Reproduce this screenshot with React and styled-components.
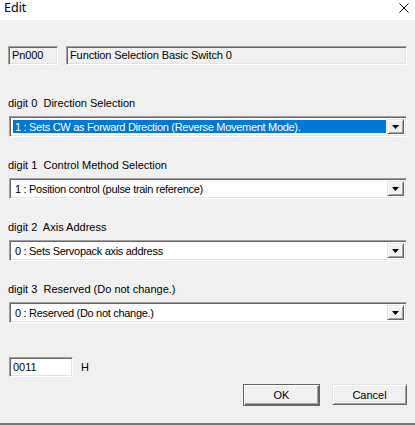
import React from "react";
import styled, { createGlobalStyle, css } from "styled-components";

const Global = createGlobalStyle`
  html, body { margin: 0; padding: 0; background: #f0f0f0; }
  body { font-family: "Liberation Sans", Arial, sans-serif; }
`;

const sunken = css`
  box-sizing: border-box;
  border: 1px solid;
  border-color: #a0a0a0 #ffffff #ffffff #a0a0a0;
  box-shadow: inset 1px 1px 0 #696969, inset -1px -1px 0 #e3e3e3;
`;

const raised = css`
  box-sizing: border-box;
  border: 1px solid;
  border-color: #e3e3e3 #696969 #696969 #e3e3e3;
  box-shadow: inset 1px 1px 0 #ffffff, inset -1px -1px 0 #a0a0a0;
`;

const Window = styled.div`
  width: 415px;
  height: 425px;
  box-sizing: border-box;
  background: #f0f0f0;
  display: flex;
  flex-direction: column;
  border-bottom: 2px solid #767676;
  overflow: hidden;
`;

const TitleBar = styled.div`
  height: 20px;
  background: #ffffff;
  display: flex;
  align-items: flex-start;
  justify-content: space-between;
  padding: 0 6px 0 4px;
`;

const Title = styled.span`
  font-family: "Noto Sans", "Open Sans", sans-serif;
  font-size: 12.5px;
  line-height: 16px;
  color: #000;
`;

const Close = styled.svg`
  margin-top: 3px;
  width: 10px;
  height: 10px;
`;

const Body = styled.div`
  flex: 1;
  display: flex;
  flex-direction: column;
  padding: 26px 8px 0 8px;
  font-size: 11px;
  color: #000;
`;

const ParamRow = styled.div`
  display: flex;
  gap: 8px;
  height: 19px;
  margin-bottom: 31px;
`;

const ReadBox = styled.div`
  ${sunken};
  width: ${(p) => p.$w || "auto"};
  flex: ${(p) => (p.$grow ? 1 : "none")};
  background: #f0f0f0;
  padding: 0 3px;
  line-height: 17px;
  white-space: nowrap;
  letter-spacing: -0.1px;
`;

const Group = styled.div`
  display: flex;
  flex-direction: column;
  gap: 6px;
  margin-bottom: 21px;
`;

const Label = styled.div`
  height: 14px;
  line-height: 14px;
  white-space: pre;
`;

const Combo = styled.div`
  ${sunken};
  height: 21px;
  margin-left: 1px;
  background: #ffffff;
  display: flex;
  align-items: stretch;
  padding: 2px;
`;

const ComboText = styled.div`
  flex: 1;
  margin: 1px;
  padding: 0 2px;
  line-height: 15px;
  white-space: nowrap;
  overflow: hidden;
  letter-spacing: -0.3px;
  background: ${(p) => (p.$selected ? "#0078d7" : "transparent")};
  color: ${(p) => (p.$selected ? "#ffffff" : "#000000")};
`;

const DropButton = styled.div`
  ${raised};
  width: 17px;
  background: #f0f0f0;
  display: flex;
  align-items: center;
  justify-content: center;
`;

const HexRow = styled.div`
  display: flex;
  align-items: center;
  gap: 8px;
  margin-top: 13px;
`;

const HexInput = styled.div`
  ${sunken};
  width: 64px;
  height: 20px;
  margin-left: 1px;
  background: #ffffff;
  padding: 0 3px;
  line-height: 18px;
`;

const Unit = styled.span`
  font-size: 11px;
`;

const ButtonRow = styled.div`
  display: flex;
  justify-content: flex-end;
  gap: 12px;
  margin-top: 7px;
`;

const Button = styled.div`
  ${raised};
  width: 75px;
  height: 21px;
  background: #f0f0f0;
  display: flex;
  align-items: center;
  justify-content: center;
  font-size: 11px;
  ${(p) =>
    p.$default &&
    css`
      width: 77px;
      height: 22px;
      border: 1px solid #646464;
      box-shadow: inset 1px 1px 0 #ffffff, inset -1px -1px 0 #696969,
        inset -2px -2px 0 #a0a0a0;
    `}
`;

const Arrow = () => (
  <svg width="7" height="4" viewBox="0 0 7 4">
    <path d="M0 0H7L3.5 4Z" fill="#000" />
  </svg>
);

const groups = [
  { label: "digit 0  Direction Selection", value: "1 : Sets CW as Forward Direction (Reverse Movement Mode).", selected: true },
  { label: "digit 1  Control Method Selection", value: "1 : Position control (pulse train reference)" },
  { label: "digit 2  Axis Address", value: "0 : Sets Servopack axis address" },
  { label: "digit 3  Reserved (Do not change.)", value: "0 : Reserved (Do not change.)" },
];

export default function App() {
  return (
    <>
      <Global />
      <Window>
        <TitleBar>
          <Title>Edit</Title>
          <Close viewBox="0 0 10 10">
            <path d="M0.5 0.5L9.5 9.5M9.5 0.5L0.5 9.5" stroke="#000" strokeWidth="1" />
          </Close>
        </TitleBar>
        <Body>
          <ParamRow>
            <ReadBox $w="50px">Pn000</ReadBox>
            <ReadBox $grow>Function Selection Basic Switch 0</ReadBox>
          </ParamRow>
          {groups.map((g) => (
            <Group key={g.label}>
              <Label>{g.label}</Label>
              <Combo>
                <ComboText $selected={g.selected}>{g.value}</ComboText>
                <DropButton>
                  <Arrow />
                </DropButton>
              </Combo>
            </Group>
          ))}
          <HexRow>
            <HexInput>0011</HexInput>
            <Unit>H</Unit>
          </HexRow>
          <ButtonRow>
            <Button $default>OK</Button>
            <Button>Cancel</Button>
          </ButtonRow>
        </Body>
      </Window>
    </>
  );
}
